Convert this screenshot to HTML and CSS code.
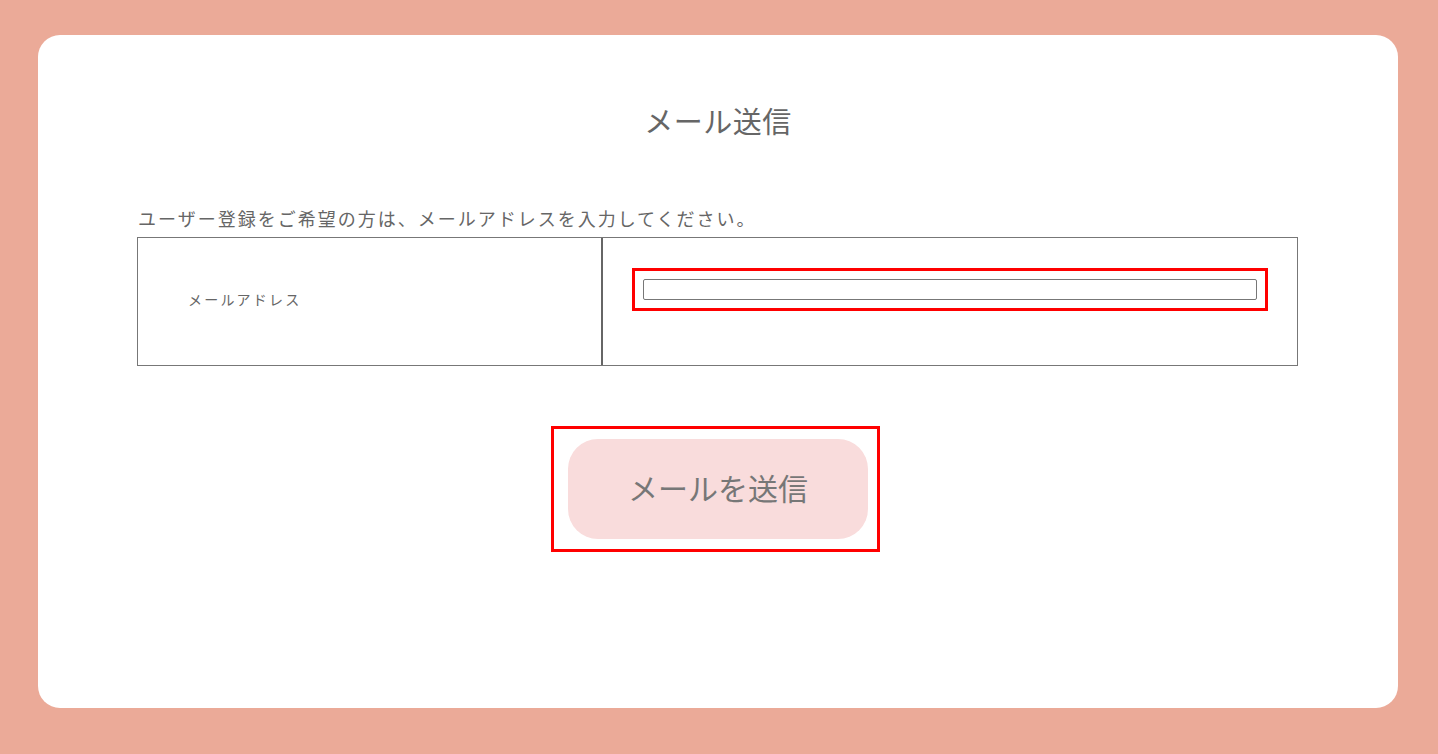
FILE: index.html
```html
<!DOCTYPE html>
<html lang="ja">
<head>
<meta charset="utf-8">
<title>メール送信</title>
<link rel="stylesheet" href="styles.css">
</head>
<body>
<main class="card">
  <h1 class="title">メール送信</h1>
  <p class="intro">ユーザー登録をご希望の方は、メールアドレスを入力してください。</p>
  <div class="form-table">
    <div class="label-cell">メールアドレス</div>
    <div class="input-cell">
      <div class="highlight input-wrap">
        <input class="email-input" type="text" aria-label="メールアドレス">
      </div>
    </div>
  </div>
  <div class="actions">
    <div class="highlight button-wrap">
      <button class="submit" type="button">メールを送信</button>
    </div>
  </div>
</main>
</body>
</html>
```

FILE: styles.css
```css
* { box-sizing: border-box; }

html, body {
  margin: 0;
  padding: 0;
}

body {
  background: #ebaa98;
  padding: 35px 40px 46px 38px;
  font-family: "Noto Sans CJK JP", "Noto Sans", sans-serif;
  color: #666;
}

.card {
  background: #fff;
  border-radius: 22px;
  height: 673px;
  padding: 65px 100px 0 100px;
}

.title {
  margin: 0;
  text-align: center;
  font-size: 29px;
  font-weight: 400;
  line-height: 40px;
  color: #666;
  letter-spacing: 0.5px;
}

.intro {
  margin: 65px 0 6px 0;
  font-size: 18px;
  line-height: 26px;
  letter-spacing: 2px;
  color: #666;
}

.form-table {
  display: grid;
  grid-template-columns: 465px 1fr;
  border: 1px solid #777;
  margin-left: -1px;
}

.label-cell {
  border-right: 2px solid #666;
  display: flex;
  align-items: center;
  padding: 0 0 6px 50px;
  font-size: 14px;
  letter-spacing: 2.2px;
  color: #666;
}

.input-cell {
  padding: 30px 29px 54px 29px;
}

.highlight {
  border: 3px solid #ff0000;
}

.input-wrap {
  padding: 8px;
}

.email-input {
  display: block;
  width: 100%;
  height: 21px;
  margin: 0;
  border: 1px solid #777;
  border-radius: 2px;
  background: #fff;
  padding: 0 4px;
  outline: none;
}

.actions {
  display: flex;
  justify-content: center;
  margin-top: 60px;
  padding-right: 5px;
}

.button-wrap {
  padding: 10px 9px 10px 14px;
}

.submit {
  display: block;
  width: 300px;
  height: 100px;
  border: none;
  border-radius: 30px;
  background: #f9dcdc;
  color: #777;
  font-family: "Noto Sans CJK JP", "Noto Sans", sans-serif;
  font-size: 30px;
  font-weight: 400;
  letter-spacing: 0;
  padding: 0 0 5px 0;
  cursor: pointer;
}
```
